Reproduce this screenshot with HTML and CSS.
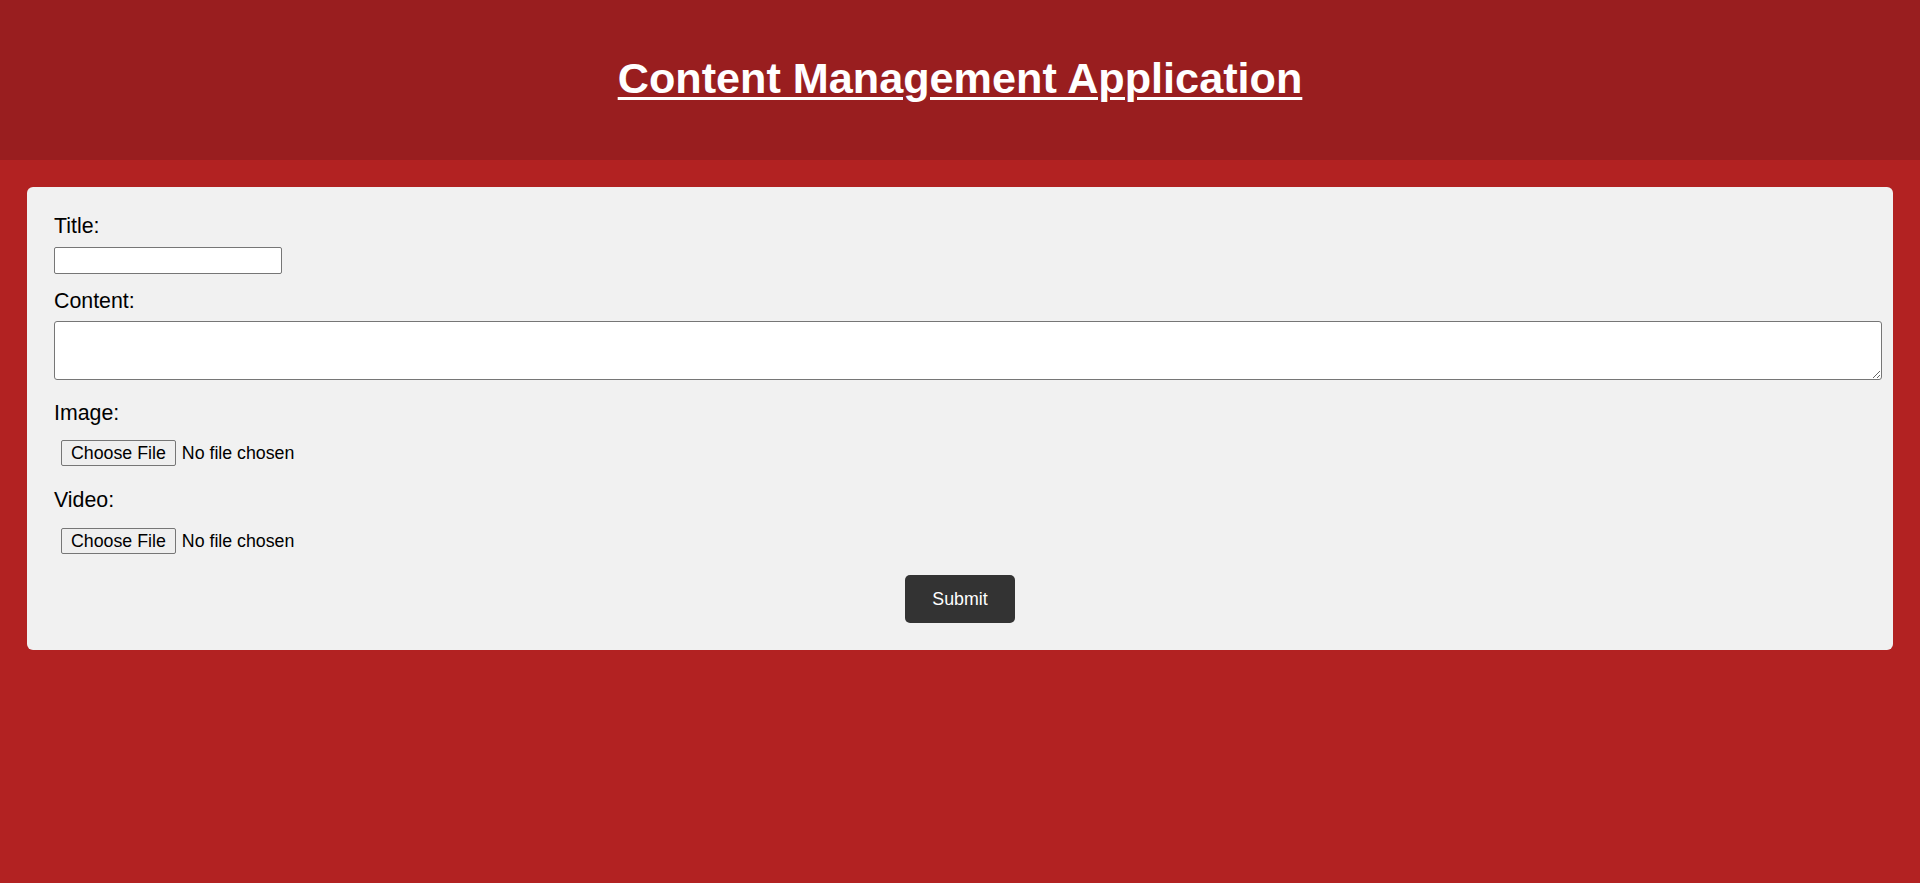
FILE: index.html
```html
<!DOCTYPE html>
<html lang="en">
<head>
<meta charset="utf-8">
<title>Content Management Application</title>
<link rel="stylesheet" href="styles.css">
</head>
<body>
<header class="site-header">
  <h1 class="site-title">Content Management Application</h1>
</header>
<main class="card">
  <form class="cms-form">
    <label class="field-label label-title" for="title">Title:</label>
    <input class="text-input" type="text" id="title" name="title">
    <label class="field-label label-content" for="content">Content:</label>
    <textarea class="text-area" id="content" name="content"></textarea>
    <label class="field-label label-image" for="image">Image:</label>
    <input class="file-input" type="file" id="image" name="image">
    <label class="field-label label-video" for="video">Video:</label>
    <input class="file-input" type="file" id="video" name="video">
    <button class="submit-btn" type="submit">Submit</button>
  </form>
</main>
</body>
</html>
```

FILE: styles.css
```css
html, body {
  margin: 0;
  padding: 0;
}
body {
  background: #b22222;
  font-family: "Liberation Sans", Arial, sans-serif;
  color: #000;
  min-height: 883px;
}
.site-header {
  box-sizing: border-box;
  background: #991e1f;
  height: 160px;
  padding-bottom: 4px;
  display: flex;
  align-items: center;
  justify-content: center;
}
.site-title {
  margin: 0;
  color: #fff;
  font-size: 43.2px;
  font-weight: bold;
  text-decoration: underline;
  text-decoration-thickness: 3px;
  text-underline-offset: 4px;
}
.card {
  margin: 27px;
  padding: 27px;
  background: #f1f1f1;
  border-radius: 6px;
}
.cms-form {
  display: flex;
  flex-direction: column;
  align-items: flex-start;
}
.field-label {
  display: block;
  font-size: 21.33px;
  line-height: 24px;
  margin: 0 0 9px;
}
.label-content {
  margin-top: 15px;
  margin-bottom: 8px;
}
.label-image {
  margin-top: 21px;
  margin-bottom: 8px;
}
.label-video {
  margin-top: 15px;
  margin-bottom: 9px;
}
.text-input {
  box-sizing: border-box;
  width: 228px;
  height: 27px;
  margin: 0;
  padding: 1px 3px;
  border: 1px solid #767676;
  border-radius: 2px;
  background: #fff;
  font-family: "Liberation Sans", Arial, sans-serif;
  font-size: 17.78px;
}
.text-area {
  box-sizing: border-box;
  width: calc(100% + 16px);
  height: 59px;
  margin: 0;
  padding: 7px;
  border: 1px solid #767676;
  border-radius: 3px;
  background: #fff;
  font-family: "Liberation Mono", monospace;
  font-size: 17.78px;
}
.file-input {
  box-sizing: border-box;
  height: 40px;
  margin: 0;
  padding: 7px;
  font-family: "Liberation Sans", Arial, sans-serif;
  font-size: 17.78px;
  color: #000;
}
.file-input::file-selector-button {
  font-family: "Liberation Sans", Arial, sans-serif;
  font-size: 17.78px;
  height: 26px;
  padding: 0 9px;
  margin: 0 6px 0 0;
  border: 1px solid #767676;
  border-radius: 2px;
  background: #efefef;
  color: #000;
}
.submit-btn {
  align-self: center;
  margin-top: 14px;
  width: 110px;
  height: 48px;
  padding: 0;
  border: none;
  border-radius: 5px;
  background: #333;
  color: #fff;
  font-family: "Liberation Sans", Arial, sans-serif;
  font-size: 17.78px;
  cursor: pointer;
}
```
